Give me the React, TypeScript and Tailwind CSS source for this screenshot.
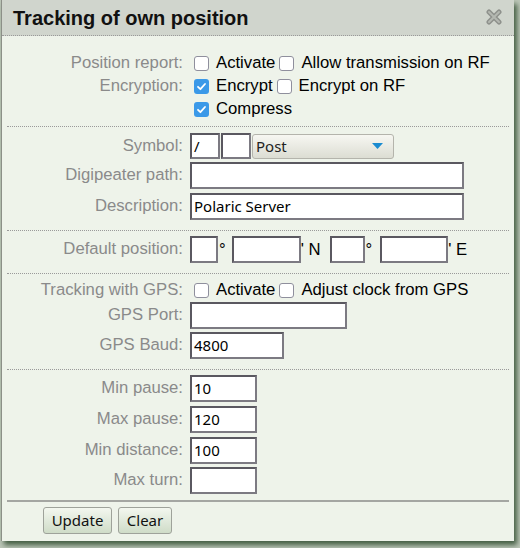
import React from "react";

const labelFont = { fontFamily: '"Liberation Sans", Arial, sans-serif' };
const inputFont = { fontFamily: '"Noto Sans", "Open Sans", sans-serif' };

function Row({ label, children, className = "" }: { label: string; children?: React.ReactNode; className?: string }) {
    return (
        <div className={"flex items-center " + className}>
            <div className="w-[176px] shrink-0 text-right text-[16.7px] text-[#8a8a8a] leading-none" style={labelFont}>
                {label}
            </div>
            <div className="ml-[7px] flex items-center">{children}</div>
        </div>
    );
}

function Box({ checked = false }: { checked?: boolean }) {
    if (checked) {
        return (
            <span className="flex h-[15px] w-[15px] items-center justify-center rounded-[3px] bg-[#3b99e8]">
                <svg width="11" height="11" viewBox="0 0 11 11">
                    <path d="M2 5.8 L4.4 8.2 L9 3" fill="none" stroke="white" strokeWidth="1.8" strokeLinecap="round" strokeLinejoin="round" />
                </svg>
            </span>
        );
    }
    return <span className="block h-[15px] w-[15px] rounded-[3px] border border-[#8f8f9d] bg-white" />;
}

function Check({ label, checked = false }: { label: string; checked?: boolean }) {
    return (
        <span className="ml-[4px] flex items-center">
            <Box checked={checked} />
            <span className="ml-[7px] text-[16.7px] leading-none text-black" style={labelFont}>
                {label}
            </span>
        </span>
    );
}

function Field({ w, value = "", h = "h-[27px]" }: { w: string; value?: string; h?: string }) {
    return (
        <div
            className={`${w} ${h} flex items-center border-2 border-[#7c7a82] border-t-[#5a5860] border-l-[#5a5860] bg-white pl-[2px] text-[15px] text-black`}
            style={inputFont}
        >
            {value}
        </div>
    );
}

export default function App() {
    return (
        <div className="h-[548px] w-[520px] overflow-hidden bg-[#bcc6b8]">
            <div className="ml-[1px] h-[541px] w-[513px] border-l border-[#8c9088] bg-[#eef3ea] shadow-[3px_4px_5px_rgba(30,60,30,0.75)]">
                {/* title */}
                <div className="flex h-[36px] items-center justify-between border-b border-dotted border-[#9a9a9a] bg-[#d0d5cd] pl-[11px] pr-[12px]">
                    <span className="text-[20px] font-bold text-[#111]" style={labelFont}>
                        Tracking of own position
                    </span>
                    <svg width="16" height="16" viewBox="0 0 16 16" className="mt-[-1px]">
                        <path d="M3 3 L13 13 M13 3 L3 13" stroke="#8e918c" strokeWidth="5" strokeLinecap="round" />
                        <path d="M3 3 L13 13 M13 3 L3 13" stroke="#b4b8b1" strokeWidth="2" strokeLinecap="round" />
                    </svg>
                </div>

                <div className="px-[5px]">
                    {/* position report */}
                    <div className="pt-[16px] pb-[5px]">
                        <Row label="Position report:" className="h-[23px]">
                            <Check label="Activate" />
                            <Check label="Allow transmission on RF" />
                        </Row>
                        <Row label="Encryption:" className="h-[23px]">
                            <Check label="Encrypt" checked />
                            <Check label="Encrypt on RF" />
                        </Row>
                        <Row label="" className="h-[23px]">
                            <Check label="Compress" checked />
                        </Row>
                    </div>

                    {/* symbol */}
                    <div className="border-t border-dotted border-[#9a9a9a] pt-[6px] pb-[10px]">
                        <Row label="Symbol:">
                            <Field w="w-[30px]" h="h-[26px]" value="/" />
                            <div className="ml-[1px]">
                                <Field w="w-[30px]" h="h-[26px]" />
                            </div>
                            <div
                                className="ml-[1px] flex h-[25px] w-[142px] items-center justify-between rounded-[3px] border border-[#b4b4ac] bg-gradient-to-b from-[#f7f7f2] to-[#dcddd3] pl-[3px] pr-[10px] text-[15px] text-[#222]"
                                style={inputFont}
                            >
                                <span>Post</span>
                                <svg width="11" height="6" viewBox="0 0 11 6">
                                    <path d="M0 0 L11 0 L5.5 6 Z" fill="#1a8bd0" />
                                </svg>
                            </div>
                        </Row>
                        <Row label="Digipeater path:" className="mt-[3px]">
                            <Field w="w-[274px]" />
                        </Row>
                        <Row label="Description:" className="mt-[4px]">
                            <Field w="w-[274px]" value="Polaric Server" />
                        </Row>
                    </div>

                    {/* default position */}
                    <div className="border-t border-dotted border-[#9a9a9a] pt-[5px] pb-[10px]">
                        <Row label="Default position:">
                            <Field w="w-[28px]" />
                            <span className="ml-[1px] mr-[6px] text-[16.7px]" style={labelFont}>°</span>
                            <Field w="w-[69px]" />
                            <span className="mr-[9px] text-[16.7px]" style={labelFont}>' N</span>
                            <Field w="w-[35px]" />
                            <span className="ml-[1px] mr-[8px] text-[16.7px]" style={labelFont}>°</span>
                            <Field w="w-[68px]" />
                            <span className="text-[16.7px]" style={labelFont}>' E</span>
                        </Row>
                    </div>

                    {/* gps */}
                    <div className="border-t border-dotted border-[#9a9a9a] pt-[5px] pb-[10px]">
                        <Row label="Tracking with GPS:" className="h-[23px]">
                            <Check label="Activate" />
                            <Check label="Adjust clock from GPS" />
                        </Row>
                        <Row label="GPS Port:">
                            <Field w="w-[157px]" />
                        </Row>
                        <Row label="GPS Baud:" className="mt-[3px]">
                            <Field w="w-[94px]" value="4800" />
                        </Row>
                    </div>

                    {/* pauses */}
                    <div className="border-t border-dotted border-[#9a9a9a] pt-[5px] pb-[6px]">
                        <Row label="Min pause:">
                            <Field w="w-[67px]" value="10" />
                        </Row>
                        <Row label="Max pause:" className="mt-[4px]">
                            <Field w="w-[67px]" value="120" />
                        </Row>
                        <Row label="Min distance:" className="mt-[4px]">
                            <Field w="w-[67px]" value="100" />
                        </Row>
                        <Row label="Max turn:" className="mt-[3px]">
                            <Field w="w-[67px]" />
                        </Row>
                    </div>

                    {/* buttons */}
                    <div className="flex gap-[6px] border-t-2 border-[#a4a6a2] pt-[5px] pl-[36px]">
                        <button
                            className="h-[27px] w-[69px] rounded-[3px] border border-[#9ea29a] bg-gradient-to-b from-[#f3f7ef] to-[#cfdcc8] text-[15px] text-[#111]"
                            style={inputFont}
                        >
                            Update
                        </button>
                        <button
                            className="h-[27px] w-[54px] rounded-[3px] border border-[#9ea29a] bg-gradient-to-b from-[#f3f7ef] to-[#cfdcc8] text-[15px] text-[#111]"
                            style={inputFont}
                        >
                            Clear
                        </button>
                    </div>
                </div>
            </div>
        </div>
    );
}
